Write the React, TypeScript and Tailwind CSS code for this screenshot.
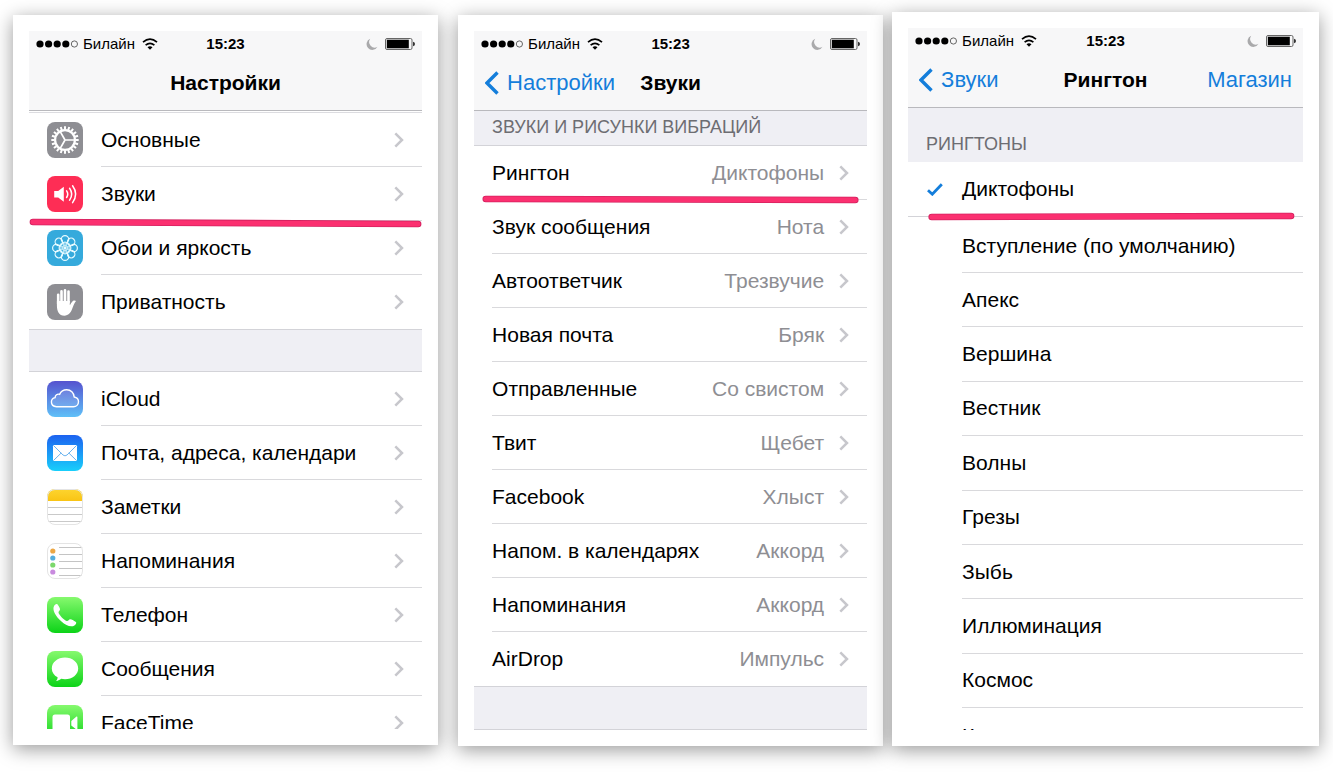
import React from "react";

const ringtones = [
  "Апекс",
  "Вершина",
  "Вестник",
  "Волны",
  "Грезы",
  "Зыбь",
  "Иллюминация",
  "Космос",
];

const sounds = [
  { label: "Рингтон", value: "Диктофоны" },
  { label: "Звук сообщения", value: "Нота" },
  { label: "Автоответчик", value: "Трезвучие" },
  { label: "Новая почта", value: "Бряк" },
  { label: "Отправленные", value: "Со свистом" },
  { label: "Твит", value: "Щебет" },
  { label: "Facebook", value: "Хлыст" },
  { label: "Напом. в календарях", value: "Аккорд" },
  { label: "Напоминания", value: "Аккорд" },
  { label: "AirDrop", value: "Импульс" },
];

function GearIcon() {
  const teeth = Array.from({ length: 20 }, (_, i) => i * 18);
  return (
    <g stroke="#fff" fill="none">
      <circle cx="18" cy="18" r="9.9" strokeWidth="2.2" />
      {teeth.map((angle) => (
        <path
          key={angle}
          d="M18 7.5V4.3"
          strokeWidth="2"
          transform={`rotate(${angle} 18 18)`}
        />
      ))}
      <path d="M18 18H28M18 18L13.1 9.4M18 18L13.1 26.6" strokeWidth="1.7" />
    </g>
  );
}

function SpeakerIcon() {
  return (
    <g>
      <path d="M7.2 15h4l5.6-4.3v15L11.2 21.5h-4z" fill="#fff" />
      <g stroke="#fff" fill="none" strokeLinecap="round">
        <path d="M19.6 14.9q2.3 3.3 0 6.6" strokeWidth="1.5" />
        <path d="M22.6 12.3q4.2 5.9 0 11.8" strokeWidth="1.5" />
        <path d="M25.6 9.8q6.1 8.4 0 16.8" strokeWidth="1.5" />
      </g>
    </g>
  );
}

function FlowerIcon() {
  const petals = Array.from({ length: 8 }, (_, i) => i * 45);
  return (
    <g stroke="#e8fbff" strokeWidth="1.2" fill="none">
      {petals.map((angle) => (
        <circle key={angle} cx="18" cy="9.3" r="3.7" transform={`rotate(${angle} 18 18)`} />
      ))}
      {petals.map((angle) => (
        <circle key={angle} cx="18" cy="14" r="2.1" strokeWidth="0.8" transform={`rotate(${angle} 18 18)`} />
      ))}
      <circle cx="18" cy="18" r="1.4" fill="#e8fbff" stroke="none" />
    </g>
  );
}

function HandIcon() {
  return (
    <g>
      <path
        d="M11.2 20V10.8M14.5 18V7.4M18 18V6.3M21.5 18V7.6"
        stroke="#fff"
        strokeWidth="2.6"
        strokeLinecap="round"
        fill="none"
      />
      <path
        d="M9.9 17h12.9v4.2c1-1.3 1.8-3.2 3.1-4.2 1-.7 2.6-.6 3.1.1-1.5 1.4-2.5 4.7-3.9 8-1.5 3.9-3.8 6.6-7.7 6.6-5.400 0-7.500-4.600-7.500-10.200z"
        fill="#fff"
      />
    </g>
  );
}

function CloudIcon() {
  return (
    <path
      d="M9.5 25.7C6.400 25.700 4.400 23.700 4.400 21.100c0-2.300 1.500-4.100 3.700-4.500-.1-2.500 2.300-4.100 4.500-3.200 1.300-2.800 4-4.600 7.100-4.600 4.100 0 7.200 3.100 7.500 7.200 2.500.4 4.300 2.300 4.300 4.800 0 2.800-2.200 4.900-5 4.900z"
      fill="#ffffff22"
      stroke="#fff"
      strokeWidth="1.4"
    />
  );
}

function MailIcon() {
  return (
    <g>
      <rect x="6" y="10" width="24" height="16" rx="1.2" fill="#fff" />
      <path
        d="M6.5 10.5L16 20q2 1.700 4 0l9.500-9.500M6.500 25.500l7.700-7.500M29.500 25.500L21.800 18"
        fill="none"
        stroke="#6cb4ee"
        strokeWidth="1"
      />
    </g>
  );
}

function NotesIcon() {
  return (
    <g>
      <rect width="36" height="12" fill="url(#notes)" />
      <path d="M0 18.5h36M0 25.5h36M0 32.5h36" stroke="#c9c9c9" />
    </g>
  );
}

function RemindersIcon() {
  return (
    <g>
      <path d="M12 4.5h24M12 11.5h24M12 18.5h24M12 25.5h24M12 32.5h24" stroke="#c4c4c4" />
      <circle cx="5.8" cy="8" r="2.6" fill="#eca745" />
      <circle cx="5.8" cy="15" r="2.6" fill="#55aede" />
      <circle cx="5.8" cy="22" r="2.6" fill="#7cd86c" />
      <circle cx="5.8" cy="29" r="2.6" fill="#c88ade" />
    </g>
  );
}

function PhoneIcon() {
  return (
    <path
      d="M7.2 8.7c.9-1.400 2.300-2.300 3.200-1.500.9.9 2.300 3.500 2.600 4.700.3 1.300-1.600 2.200-1.500 3.500.2 2.100 5.400 7.500 8.200 8.500 1.500.5 2-1.700 3.500-1.700 1.500 0 4.500 1.800 5.700 2.900 1 1-.2 2.600-1.500 3.400-3.200 2-8.200.4-13.200-4.200C8.400 19 4.800 12.500 7.200 8.700z"
      fill="#fff"
    />
  );
}

function BubbleIcon() {
  return (
    <path
      d="M18 6.5c7.300 0 13.200 4.800 13.200 10.900S25.300 28.200 18 28.200c-1.400 0-2.700-.2-3.900-.5-1 .9-2.800 2-5 2.200 1-.9 1.500-2.100 1.500-3.600C7 24.400 4.800 21.100 4.800 17.400 4.800 11.300 10.700 6.500 18 6.500z"
      fill="#fff"
    />
  );
}

function CameraIcon() {
  return (
    <path
      d="M5.500 12q0-2.500 2.500-2.500h12.500q2.500 0 2.500 2.500v12q0 2.500-2.500 2.500H8q-2.500 0-2.500-2.500zM24.300 16l5.200-4.400q.9-.4.9.6v11.800q0 1-.9.6L24.300 20.500z"
      fill="#fff"
    />
  );
}

const general = [
  { label: "Основные", fill: "#8e8e93", glyph: <GearIcon /> },
  { label: "Звуки", fill: "#fe2d55", glyph: <SpeakerIcon /> },
  { label: "Обои и яркость", fill: "#35aadc", glyph: <FlowerIcon /> },
  { label: "Приватность", fill: "#8e8e93", glyph: <HandIcon /> },
];

const apps = [
  { label: "iCloud", fill: "url(#cloud)", glyph: <CloudIcon /> },
  { label: "Почта, адреса, календари", fill: "url(#mail)", glyph: <MailIcon /> },
  { label: "Заметки", fill: "#fff", glyph: <NotesIcon />, outlined: true },
  { label: "Напоминания", fill: "#fff", glyph: <RemindersIcon />, outlined: true },
  { label: "Телефон", fill: "url(#green)", glyph: <PhoneIcon /> },
  { label: "Сообщения", fill: "url(#green)", glyph: <BubbleIcon /> },
  { label: "FaceTime", fill: "url(#green)", glyph: <CameraIcon /> },
];

function Gradient({ id, from, to }: { id: string; from: string; to: string }) {
  return (
    <linearGradient id={id} x1="0" y1="0" x2="0" y2="1">
      <stop offset="0" stopColor={from} />
      <stop offset="1" stopColor={to} />
    </linearGradient>
  );
}

function IconDefs() {
  return (
    <svg className="absolute size-0" aria-hidden="true">
      <defs>
        <Gradient id="cloud" from="#5552cf" to="#5fc0f8" />
        <Gradient id="mail" from="#1d62f0" to="#19cffb" />
        <Gradient id="notes" from="#fdd530" to="#f9c414" />
        <Gradient id="green" from="#86f96e" to="#0cd318" />
        <clipPath id="tile">
          <rect width="36" height="36" rx="8" />
        </clipPath>
      </defs>
    </svg>
  );
}

function Chevron() {
  return (
    <svg viewBox="0 0 10 16" className="h-4 w-2.5 shrink-0" aria-hidden="true">
      <path d="M1.3 1.3L8 8l-6.700 6.700" fill="none" stroke="#c7c7cc" strokeWidth="2.5" />
    </svg>
  );
}

function StatusBar() {
  return (
    <div className="grid h-[26px] grid-cols-[1fr_auto_1fr] items-center px-[7px] text-[15px]">
      <div className="flex items-center gap-[5px]">
        <svg viewBox="0 0 42 8" className="h-2 w-[42px]" aria-hidden="true">
          <circle cx="4" cy="4" r="3.6" />
          <circle cx="12.6" cy="4" r="3.6" />
          <circle cx="21.2" cy="4" r="3.6" />
          <circle cx="29.8" cy="4" r="3.6" />
          <circle cx="38.4" cy="4" r="3.1" fill="none" stroke="#555" strokeWidth="0.9" />
        </svg>
        <span>Билайн</span>
        <svg viewBox="0 0 16 12" className="ml-0.5 h-3 w-4" fill="none" stroke="#000" aria-hidden="true">
          <path d="M1 4.2q7-6 14 0" strokeWidth="1.7" />
          <path d="M3.6 7.200q4.400-3.700 8.800 0" strokeWidth="1.7" />
          <path d="M8 11.800L5.500 9.300q2.500-1.900 5 0z" fill="#000" stroke="none" />
        </svg>
      </div>
      <span className="font-bold">15:23</span>
      <div className="flex items-center justify-end gap-[7px]">
        <svg viewBox="0 0 12 12" className="size-3" aria-hidden="true">
          <path d="M4.2.7A5.800 5.800 0 1 0 11.500 8.800 5.600 5.600 0 0 1 4.200.7z" fill="#a9a9ab" />
        </svg>
        <svg viewBox="0 0 30 12" className="h-3 w-[30px]" aria-hidden="true">
          <rect x="0.5" y="0.5" width="26.5" height="11" rx="1.5" fill="none" stroke="#666" />
          <rect x="1.8" y="1.7" width="22" height="8.6" />
          <path d="M28 3.800q2 .4 2 2.200t-2 2.200z" fill="#333" />
        </svg>
      </div>
    </div>
  );
}

interface ScreenProps {
  title: string;
  back?: string;
  action?: string;
  className: string;
  children: React.ReactNode;
}

function Screen({ title, back, action, className, children }: ScreenProps) {
  return (
    <section className={`relative min-w-0 p-4 ${className}`}>
      <div className="absolute inset-0 -z-10 bg-white shadow-[0_4px_18px_rgba(0,0,0,0.4)]" />
      <div className="relative bg-white">
        <header className="border-b border-[#b9b9bd] bg-[#f7f7f8]">
          <StatusBar />
          <div className="grid h-[53px] grid-cols-[1fr_auto_1fr] items-center px-[11px] pb-0.5">
            <div>
              {back && (
                <button type="button" className="flex items-center gap-[7px] text-[22px] text-[#147edb]">
                  <svg viewBox="0 0 15 24" className="h-6 w-[15px]" aria-hidden="true">
                    <path d="M12.5 1.5L2 12l10.500 10.500" fill="none" stroke="currentColor" strokeWidth="3.4" />
                  </svg>
                  {back}
                </button>
              )}
            </div>
            <h1 className="font-bold">{title}</h1>
            <div className="text-right">
              {action && (
                <button type="button" className="text-[22px] text-[#147edb]">
                  {action}
                </button>
              )}
            </div>
          </div>
        </header>
        {children}
      </div>
    </section>
  );
}

// Hand-drawn marker stroke laid over the divider of the chosen row
function Marker({ x1, x2, y1, y2 }: { x1: string; x2: string; y1: number; y2: number }) {
  return (
    <svg className="pointer-events-none absolute -bottom-2 left-0 z-10 h-4 w-full" aria-hidden="true">
      <line x1={x1} x2={x2} y1={y1} y2={y2} stroke="#d4215f" strokeWidth="6.6" strokeLinecap="round" />
      <line x1={x1} x2={x2} y1={y1} y2={y2} stroke="#fb3070" strokeWidth="5" strokeLinecap="round" />
    </svg>
  );
}

interface SettingsRowProps {
  label: string;
  fill: string;
  glyph: React.ReactNode;
  outlined?: boolean;
}

function SettingsRow({ label, fill, glyph, outlined }: SettingsRowProps) {
  return (
    <a href="#" className="flex h-[54px] items-center gap-[18px] pl-[18px]">
      <svg viewBox="0 0 36 36" className="size-9 shrink-0" aria-hidden="true">
        <g clipPath="url(#tile)">
          <rect width="36" height="36" fill={fill} />
          {glyph}
        </g>
        {outlined && <rect x="0.5" y="0.5" width="35" height="35" rx="7.5" fill="none" stroke="#e4e4e4" />}
      </svg>
      <span className="flex h-full min-w-0 flex-1 items-center justify-between border-b border-[#d9d9dc] pr-[18px] group-last:border-transparent">
        <span className="whitespace-nowrap">{label}</span>
        <Chevron />
      </span>
    </a>
  );
}

function SettingsScreen() {
  return (
    <Screen title="Настройки" className="mt-[15px] flex-[425]">
      <div className="h-0.5 border-b border-[#dcdce0]" />
      <ul>
        {general.map((row) => (
          <li key={row.label} className="group relative">
            <SettingsRow {...row} />
            {row.label === "Звуки" && <Marker x1="1%" x2="99%" y1={9} y2={11} />}
          </li>
        ))}
      </ul>
      <div className="h-[43px] border-y border-[#d3d3d8] bg-[#efeff4]" />
      <ul>
        {apps.map((row) => (
          <li key={row.label} className="group overflow-hidden last:h-[33px]">
            <SettingsRow {...row} />
          </li>
        ))}
      </ul>
    </Screen>
  );
}

function SoundsScreen() {
  return (
    <Screen title="Звуки" back="Настройки" className="mt-[15px] ml-5 flex-[425]">
      <h2 className="flex h-[35px] items-center border-b border-[#d3d3d8] bg-[#efeff4] pb-0.5 pl-[18px] text-lg text-[#6d6d72]">
        ЗВУКИ И РИСУНКИ ВИБРАЦИЙ
      </h2>
      <ul className="pl-[18px]">
        {sounds.map((row) => (
          <li key={row.label} className="group relative">
            <a
              href="#"
              className="flex h-[54px] items-center border-b border-[#d9d9dc] pr-[18px] whitespace-nowrap group-last:border-transparent"
            >
              <span className="flex-1">{row.label}</span>
              <span className="mr-[15px] text-[#8e8e93]">{row.value}</span>
              <Chevron />
            </a>
            {row.label === "Рингтон" && (
              <div className="absolute right-0 bottom-0 -left-[18px]">
                <Marker x1="3%" x2="97%" y1={7} y2={8} />
              </div>
            )}
          </li>
        ))}
      </ul>
      <div className="h-11 border-y border-[#d3d3d8] bg-[#efeff4]" />
    </Screen>
  );
}

function RingtoneOption({ label, checked = false }: { label: string; checked?: boolean }) {
  return (
    <label className="relative flex h-full items-center">
      <input type="radio" name="ringtone" defaultChecked={checked} className="peer sr-only" />
      <svg viewBox="0 0 16 13" className="invisible ml-[19px] h-[13px] w-4 peer-checked:visible" aria-hidden="true">
        <path d="M1 7.200l4.300 4L14.800 1.200" fill="none" stroke="#147edb" strokeWidth="2.8" />
      </svg>
      <span className="ml-[19px] whitespace-nowrap">{label}</span>
    </label>
  );
}

function RingtoneScreen() {
  return (
    <Screen title="Рингтон" back="Звуки" action="Магазин" className="mt-3 ml-[9px] flex-[427]">
      <h2 className="flex h-[54px] items-end bg-[#efeff4] pb-1.5 pl-[18px] text-lg leading-6 text-[#6d6d72]">
        РИНГТОНЫ
      </h2>
      <div className="relative h-[55px] border-b border-[#d3d3d8]">
        <RingtoneOption label="Диктофоны" checked />
        <Marker x1="6%" x2="97%" y1={9} y2={8} />
      </div>
      <div className="flex h-14 flex-col">
        <div className="flex-1 pt-0.5">
          <RingtoneOption label="Вступление (по умолчанию)" />
        </div>
        <div className="ml-[54px] border-b border-[#d9d9dc]" />
      </div>
      <ul className="grid h-[435px] auto-rows-fr">
        {ringtones.map((name) => (
          <li key={name} className="flex flex-col">
            <div className="flex-1">
              <RingtoneOption label={name} />
            </div>
            <div className="ml-[54px] border-b border-[#d9d9dc]" />
          </li>
        ))}
      </ul>
      <div className="h-[22px] overflow-hidden">
        <div className="h-14">
          <RingtoneOption label="Кристаллы" />
        </div>
      </div>
    </Screen>
  );
}

export default function App() {
  return (
    <main className="isolate flex min-h-screen items-start bg-white pr-[14px] pb-7 pl-[13px] font-['Liberation_Sans',Arial,sans-serif] text-[21px] leading-6 text-black">
      <IconDefs />
      <SettingsScreen />
      <SoundsScreen />
      <RingtoneScreen />
    </main>
  );
}
